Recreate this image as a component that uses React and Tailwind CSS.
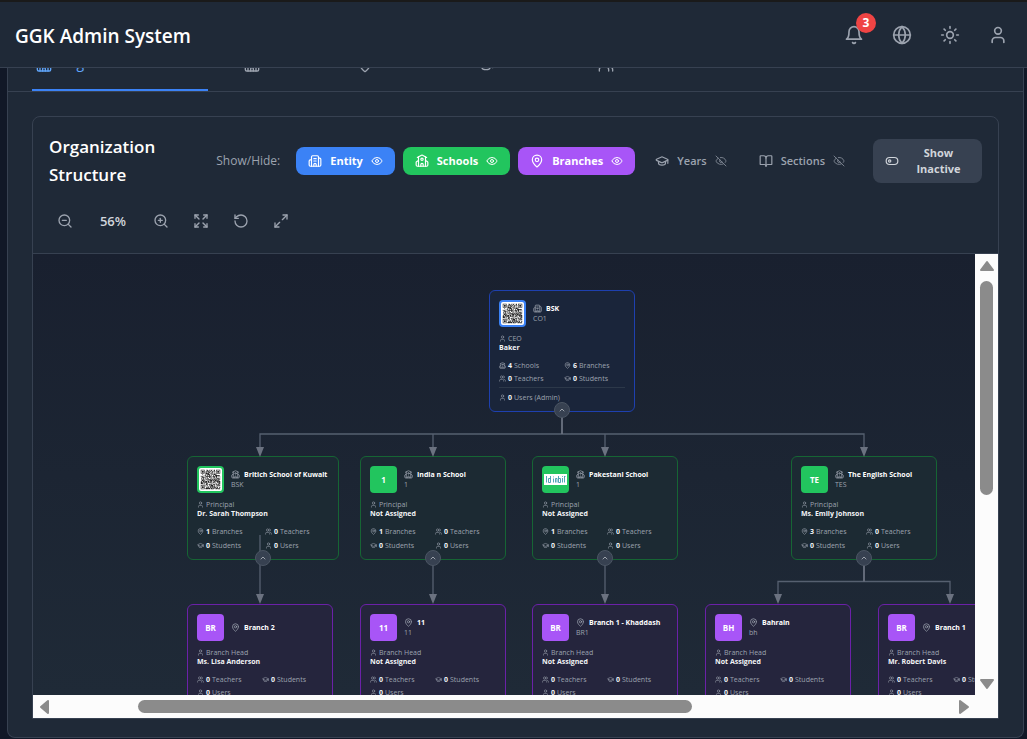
import React from "react";
import {
  Building2,
  School,
  MapPin,
  GraduationCap,
  Eye,
  EyeOff,
  ZoomIn,
  ZoomOut,
  Expand,
  RotateCcw,
  Maximize2,
  Globe,
  Sun,
  User,
  ChevronUp,
} from "lucide-react";

function Glyph({ className, children }) {
  return (
    <svg
      viewBox="0 0 24 24"
      fill="none"
      stroke="currentColor"
      strokeWidth="2"
      strokeLinecap="round"
      strokeLinejoin="round"
      className={className}
      aria-hidden="true"
    >
      {children}
    </svg>
  );
}

function Bell({ className }) {
  return (
    <Glyph className={className}>
      <path d="M6 8a6 6 0 0 1 12 0c0 7 3 9 3 9H3s3-2 3-9" />
      <path d="M10.3 21a1.94 1.94 0 0 0 3.4 0" />
    </Glyph>
  );
}

function Users({ className }) {
  return (
    <Glyph className={className}>
      <path d="M16 21v-2a4 4 0 0 0-4-4H6a4 4 0 0 0-4 4v2" />
      <circle cx="9" cy="7" r="4" />
      <path d="M22 21v-2a4 4 0 0 0-3-3.87" />
      <path d="M16 3.13a4 4 0 0 1 0 7.75" />
    </Glyph>
  );
}

function BookOpen({ className }) {
  return (
    <Glyph className={className}>
      <path d="M12 7v14" />
      <path d="M3 18a1 1 0 0 1-1-1V4a1 1 0 0 1 1-1h5a4 4 0 0 1 4 4 4 4 0 0 1 4-4h5a1 1 0 0 1 1 1v13a1 1 0 0 1-1 1h-6a3 3 0 0 0-3 3 3 3 0 0 0-3-3z" />
    </Glyph>
  );
}

function ToggleOff({ className }) {
  return (
    <Glyph className={className}>
      <rect x="2" y="6" width="20" height="12" rx="6" />
      <circle cx="8" cy="12" r="2" />
    </Glyph>
  );
}

const QR_SIZE = 33;

function inFinder(x, y) {
  const far = QR_SIZE - 8;
  return (x < 8 && y < 8) || (x >= far && y < 8) || (x < 8 && y >= far);
}

function qrPath() {
  let d = "";
  let seed = 17;
  for (let y = 0; y < QR_SIZE; y++) {
    for (let x = 0; x < QR_SIZE; x++) {
      seed = (seed * 1103515245 + 12345) % 2147483648;
      if (!inFinder(x, y) && seed / 2147483648 > 0.42) d += `M${x} ${y}h1v1h-1z`;
    }
  }
  return d;
}

const QR_PATH = qrPath();

function QrCode() {
  return (
    <svg viewBox="-3 -3 39 39" className="h-[23px] w-[23px] rounded-[2px] bg-white" role="img" aria-label="QR code">
      <path d={QR_PATH} fill="#222" />
      {[[0, 0], [26, 0], [0, 26]].map(([x, y]) => (
        <g key={`${x}-${y}`}>
          <rect x={x + 0.5} y={y + 0.5} width="6" height="6" fill="none" stroke="#222" />
          <rect x={x + 2} y={y + 2} width="3" height="3" fill="#222" />
        </g>
      ))}
    </svg>
  );
}

function Wordmark() {
  return (
    <svg viewBox="0 0 23 11" className="h-[11px] w-[23px] bg-white" role="img" aria-label="School logo">
      <g stroke="#3f9bb0" strokeWidth="0.9" fill="none">
        <path d="M2.500 2v6.500M6.500 2v6.500M9.500 4.500v4M9.500 2.500v0.800M14.500 2v6.500M18.500 4v4.500M20.500 2v6.500" />
        <path d="M6.500 4.500H4.500v4h2M11.500 8.500v-4h1.500v4M14.500 4.500h2v4h-2M18.500 2.200v0.800M20.500 2.500h1" />
      </g>
    </svg>
  );
}

const tones = {
  blue: { card: "border-[#1e40af] bg-[#1a253a]", avatar: "bg-[#3b82f6]" },
  green: { card: "border-[#166534] bg-[#1c2a33]", avatar: "bg-[#22c55e]" },
  purple: { card: "border-[#6b21a8] bg-[#25253d]", avatar: "bg-[#a855f7]" },
};

const statIcons = { Schools: School, Branches: MapPin, Teachers: Users, Students: GraduationCap, Users: User };

function Stat({ count, label, note }) {
  const Icon = statIcons[label];
  return (
    <div className="flex h-[9px] items-center gap-[2px] whitespace-nowrap">
      <Icon className="h-[7px] w-[7px] shrink-0 text-[#9ca3af]" />
      <span className="font-bold text-[#f3f4f6]">{count}</span>
      <span>{label}{note ? ` ${note}` : ""}</span>
    </div>
  );
}

function OrgCard({ node }) {
  const tone = tones[node.tone];
  const Icon = node.icon;
  return (
    <article
      className={`absolute rounded-[6px] border p-[9px] text-[7px] leading-[9px] text-[#9ca3af] ${tone.card}`}
      style={{ left: node.x, top: node.y, width: node.w || 146 }}
    >
      <div className="flex items-center gap-[7px]">
        <div
          className={`flex h-[27px] w-[27px] shrink-0 items-center justify-center rounded-[4px] text-[8px] font-bold text-white ${tone.avatar}`}
        >
          {node.avatar}
        </div>
        <div className="min-w-0">
          <div className="flex items-center gap-1">
            <Icon className="h-[9px] w-[9px] shrink-0" />
            <h3 className="text-[7px] leading-[10px] font-bold whitespace-nowrap text-white">{node.name}</h3>
          </div>
          {node.code && <p className="leading-[10px]">{node.code}</p>}
        </div>
      </div>
      <div className="mt-[7px] flex items-center gap-[2px]">
        <User className="h-[7px] w-[7px]" />
        <span>{node.role}</span>
      </div>
      <p className="text-[7px] leading-[10px] font-bold whitespace-nowrap text-[#f3f4f6]">{node.head}</p>
      <div className={`mt-2 grid grid-cols-2 gap-x-1 ${node.tone === "green" ? "gap-y-[5px]" : "gap-y-1"}`}>
        {node.stats.map(([count, label]) => (
          <Stat key={label} count={count} label={label} />
        ))}
      </div>
      {node.admins !== undefined && (
        <div className="mt-1 border-t border-[#2c3849] pt-[5px]">
          <Stat count={node.admins} label="Users" note="(Admin)" />
        </div>
      )}
    </article>
  );
}

const branchStats = [[0, "Teachers"], [0, "Students"], [0, "Users"]];
const schoolStats = (branches) => [[branches, "Branches"], [0, "Teachers"], [0, "Students"], [0, "Users"]];

const nodes = [
  { id: "bsk", tone: "blue", icon: Building2, x: 456, y: 36, avatar: <QrCode />, name: "BSK", code: "CO1", role: "CEO", head: "Baker",
    stats: [[4, "Schools"], [6, "Branches"], [0, "Teachers"], [0, "Students"]], admins: 0 },
  { id: "s1", tone: "green", icon: School, x: 154, y: 202, w: 152, avatar: <QrCode />, name: "Britich School of Kuwait", code: "BSK", role: "Principal", head: "Dr. Sarah Thompson", stats: schoolStats(1) },
  { id: "s2", tone: "green", icon: School, x: 327, y: 202, avatar: "1", name: "India n School", code: "1", role: "Principal", head: "Not Assigned", stats: schoolStats(1) },
  { id: "s3", tone: "green", icon: School, x: 499, y: 202, avatar: <Wordmark />, name: "Pakestani School", code: "1", role: "Principal", head: "Not Assigned", stats: schoolStats(1) },
  { id: "s4", tone: "green", icon: School, x: 758, y: 202, avatar: "TE", name: "The English School", code: "TES", role: "Principal", head: "Ms. Emily Johnson", stats: schoolStats(3) },
  { id: "b1", tone: "purple", icon: MapPin, x: 154, y: 350, avatar: "BR", name: "Branch 2", role: "Branch Head", head: "Ms. Lisa Anderson", stats: branchStats },
  { id: "b2", tone: "purple", icon: MapPin, x: 327, y: 350, avatar: "11", name: "11", code: "11", role: "Branch Head", head: "Not Assigned", stats: branchStats },
  { id: "b3", tone: "purple", icon: MapPin, x: 499, y: 350, avatar: "BR", name: "Branch 1 - Khaddash", code: "BR1", role: "Branch Head", head: "Not Assigned", stats: branchStats },
  { id: "b4", tone: "purple", icon: MapPin, x: 672, y: 350, avatar: "BH", name: "Bahrain", code: "bh", role: "Branch Head", head: "Not Assigned", stats: branchStats },
  { id: "b5", tone: "purple", icon: MapPin, x: 845, y: 350, avatar: "BR", name: "Branch 1", role: "Branch Head", head: "Mr. Robert Davis", stats: branchStats },
];

const toggles = [
  { x: 529, y: 156, name: "BSK" },
  { x: 230, y: 304, name: "Britich School of Kuwait" },
  { x: 400, y: 304, name: "India n School" },
  { x: 572, y: 304, name: "Pakestani School" },
  { x: 831, y: 304, name: "The English School" },
];

const arrows = [
  [227, 203], [400, 203], [572, 203], [831, 203],
  [227, 350], [400, 350], [572, 350], [745, 350], [917, 350],
];

function Connectors() {
  return (
    <svg className="pointer-events-none absolute top-0 left-0 h-[441px] w-[942px]" viewBox="0 0 942 441" aria-hidden="true">
      <g fill="none" stroke="#566070" strokeWidth="1.3">
        <path d="M227 194V180H831V194M400 180V194M572 180V194" />
        <path d="M227 281V342M400 304V342M572 304V342" />
        <path d="M745 342V327.500H917V342" />
        <path d="M529 156V180M831 304V327.500" strokeWidth="1.8" stroke="#6b7280" />
      </g>
      {arrows.map(([x, y]) => (
        <path key={`${x}-${y}`} d={`M${x - 4} ${y - 10}h8l-4 10z`} fill="#6b7280" />
      ))}
    </svg>
  );
}

function OrgChart() {
  return (
    <div className="relative min-w-0 flex-1 overflow-hidden bg-linear-to-b from-[#19202f] to-[#1f2a37]">
      {nodes.map((node) => (
        <OrgCard key={node.id} node={node} />
      ))}
      <Connectors />
      {toggles.map((t) => (
        <button
          key={t.name}
          type="button"
          aria-label={`Collapse ${t.name}`}
          className="absolute flex h-4 w-4 -translate-x-1/2 -translate-y-1/2 items-center justify-center rounded-full border border-[#4b5563] bg-[#374151] text-[#d1d5db]"
          style={{ left: t.x, top: t.y }}
        >
          <ChevronUp className="h-[8px] w-[8px]" />
        </button>
      ))}
    </div>
  );
}

function Arrow({ d, className }) {
  return (
    <svg viewBox="0 0 16 16" className={className} aria-hidden="true">
      <path d={d} fill="#8b8b8b" stroke="#8b8b8b" strokeWidth="2" strokeLinejoin="round" />
    </svg>
  );
}

function VerticalScrollbar() {
  return (
    <div className="flex w-[23px] shrink-0 flex-col items-center bg-[#fcfcfc] pt-1" aria-hidden="true">
      <Arrow d="M8 4L14 12H2z" className="h-4 w-4 shrink-0" />
      <div className="mt-[7px] min-h-0 w-[13px] flex-[213] rounded-full bg-[#8b8b8b]" />
      <div className="min-h-0 flex-[181]" />
      <Arrow d="M2 4H14L8 12z" className="mb-[3px] h-4 w-4 shrink-0" />
    </div>
  );
}

function HorizontalScrollbar() {
  return (
    <div className="flex h-[23px] shrink-0 items-center bg-[#fcfcfc] pr-[27px] pl-1" aria-hidden="true">
      <Arrow d="M4 8L11 2V14z" className="h-4 w-4 shrink-0" />
      <div className="min-w-0 flex-[85]" />
      <div className="h-[13px] min-w-0 flex-[554] rounded-full bg-[#8b8b8b]" />
      <div className="min-w-0 flex-[263]" />
      <Arrow d="M5 2L13 8L5 14z" className="h-4 w-4 shrink-0" />
    </div>
  );
}

const tabs = [
  { label: "Organization Structure", icon: Building2, width: "w-[176px]", active: true },
  { label: "Schools", icon: School, width: "w-[81px]" },
  { label: "Branches", icon: MapPin, width: "w-[89px]" },
  { label: "Students", icon: GraduationCap, width: "w-[88px]" },
  { label: "Teachers", icon: Users, width: "w-[88px]" },
];

const layers = [
  { label: "Entity", icon: Building2, on: true, style: "bg-[#3b82f6] text-white font-bold" },
  { label: "Schools", icon: School, on: true, style: "bg-[#22c55e] text-white font-bold" },
  { label: "Branches", icon: MapPin, on: true, style: "bg-[#a855f7] text-white font-bold" },
  { label: "Years", icon: GraduationCap, on: false, style: "text-[#9ca3af] font-semibold" },
  { label: "Sections", icon: BookOpen, on: false, style: "text-[#9ca3af] font-semibold" },
];

function IconButton({ icon: Icon, label }) {
  return (
    <button type="button" aria-label={label} className="rounded-lg p-2 text-[#9ca3af]">
      <Icon className="h-4 w-4" />
    </button>
  );
}

export default function App() {
  return (
    <div className="flex h-screen min-h-[600px] flex-col overflow-hidden bg-[#111827] font-['Open_Sans','Noto_Sans',sans-serif] text-white">
      <header className="flex h-[68px] shrink-0 items-center justify-between border-t-2 border-b border-t-[#1a1a1a] border-b-[#374151] bg-[#1f2937] pt-[2px] pr-[19px] pl-[15px]">
        <h1 className="text-[19px] leading-7 font-semibold whitespace-nowrap">GGK Admin System</h1>
        <div className="flex items-center gap-7 pb-[2px] text-[#9ca3af]">
          <button type="button" aria-label="Notifications, 3 unread" className="relative">
            <Bell className="h-5 w-5" />
            <span className="absolute -top-3 left-3 flex h-5 w-5 items-center justify-center rounded-full bg-[#ef4444] text-xs font-bold text-white">
              3
            </span>
          </button>
          <button type="button" aria-label="Language"><Globe className="h-5 w-5" /></button>
          <button type="button" aria-label="Theme"><Sun className="h-5 w-5" /></button>
          <button type="button" aria-label="Account"><User className="h-5 w-5" /></button>
        </div>
      </header>

      <main className="flex min-h-0 flex-1 flex-col pr-[3px] pb-px pl-[7px]">
        <div className="flex min-h-0 flex-1 flex-col rounded-b-lg border-x border-b border-[#374151] bg-[#1f2937]">
          <nav className="flex h-6 shrink-0 items-end gap-8 overflow-hidden border-b border-[#374151] px-6">
            {tabs.map(({ label, icon: Icon, width, active }) => (
              <button
                key={label}
                type="button"
                aria-label={label}
                className={`flex h-[54px] shrink-0 items-end gap-2 border-b-2 px-1 py-4 text-sm font-medium whitespace-nowrap ${width} ${
                  active ? "border-[#3b82f6] text-[#60a5fa]" : "border-transparent text-[#9ca3af]"
                }`}
              >
                <Icon className="h-4 w-4 shrink-0" />
                {active && label}
              </button>
            ))}
          </nav>

          <div className="flex min-h-0 flex-1 flex-col px-6 pt-6 pb-[18px]">
            <section className="flex min-h-0 flex-1 flex-col rounded-t-lg border border-[#374151]">
              <div className="flex flex-col gap-4 border-b border-[#374151] p-4">
                <div className="flex items-center justify-between gap-4">
                  <h2 className="w-[120px] text-[17px] leading-7 font-semibold">Organization Structure</h2>
                  <div className="flex items-center gap-4">
                    <span className="text-xs text-[#9ca3af]">Show/Hide:</span>
                    <div className="flex items-center gap-2">
                      {layers.map(({ label, icon: Icon, on, style }) => (
                        <button
                          key={label}
                          type="button"
                          aria-pressed={on}
                          className={`flex h-7 items-center gap-2 rounded-lg px-3 text-[11px] ${style}`}
                        >
                          <Icon className="h-[14px] w-[14px]" />
                          {label}
                          {on ? <Eye className="h-3 w-3" /> : <EyeOff className="h-3 w-3 opacity-70" />}
                        </button>
                      ))}
                    </div>
                    <button
                      type="button"
                      className="flex w-[109px] items-center gap-2 rounded-lg bg-[#374151] px-3 py-[6px] text-[11px] leading-4 font-bold text-[#d1d5db]"
                    >
                      <ToggleOff className="h-[14px] w-[14px] shrink-0" />
                      <span className="flex-1 text-center">Show Inactive</span>
                    </button>
                  </div>
                </div>
                <div className="flex items-center gap-2">
                  <IconButton icon={ZoomOut} label="Zoom out" />
                  <span className="w-12 text-center text-[13px] leading-5 font-semibold text-[#d1d5db]">56%</span>
                  <IconButton icon={ZoomIn} label="Zoom in" />
                  <IconButton icon={Expand} label="Fit to screen" />
                  <IconButton icon={RotateCcw} label="Reset view" />
                  <IconButton icon={Maximize2} label="Full screen" />
                </div>
              </div>
              <div className="flex min-h-0 flex-1 flex-col">
                <div className="flex min-h-0 flex-1">
                  <OrgChart />
                  <VerticalScrollbar />
                </div>
                <HorizontalScrollbar />
              </div>
            </section>
          </div>
        </div>
      </main>
    </div>
  );
}
